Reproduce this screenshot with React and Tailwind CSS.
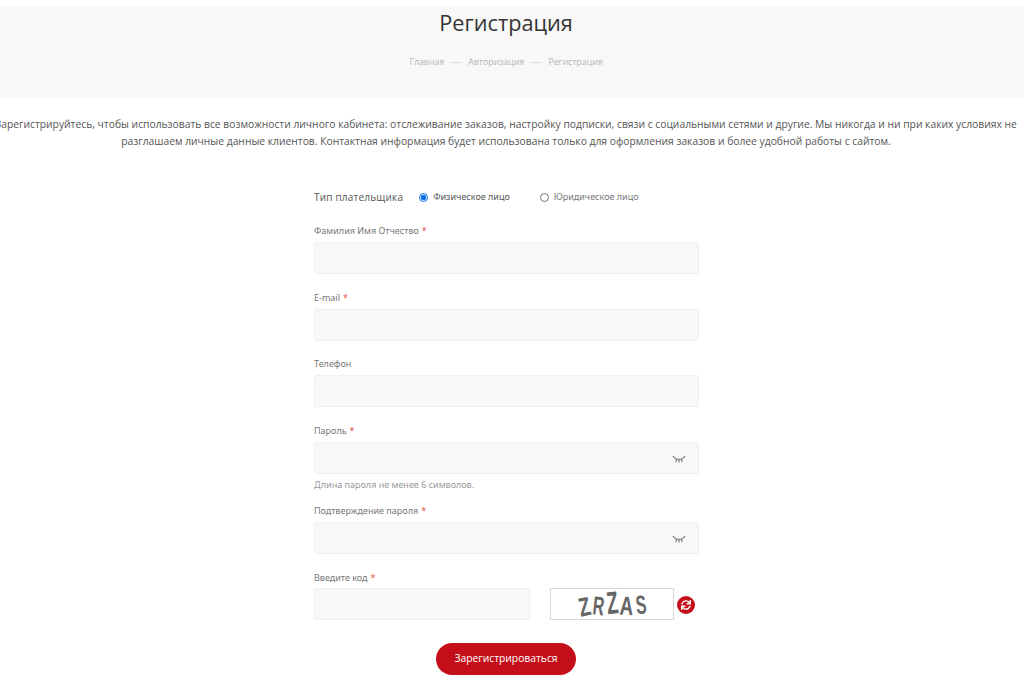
import { FaSync } from 'react-icons/fa'

const sans = "font-['Open_Sans',sans-serif]"

function EyeClosed() {
  return (
    <svg width="14" height="8" viewBox="0 0 14 8" fill="none" stroke="#7a7a7a" strokeWidth="1.2" className="absolute right-[13px] top-[13px]">
      <path d="M2 2.5C4 5 10 5 12 2.5" />
      <path d="M1 1L2.5 3M4.5 4L4 7M7 4.5V7.5M9.5 4L10 7M13 1L11.5 3" />
    </svg>
  )
}

function Label({ children, required }) {
  return (
    <label className="block text-[9px] leading-[12px] text-[#777] font-['Noto_Sans',sans-serif]">
      {children}
      {required && <span className="ml-[3px] text-[#e8504a]">*</span>}
    </label>
  )
}

function Field({ label, required, eye, hint, className = '' }) {
  return (
    <div className={className}>
      <Label required={required}>{label}</Label>
      <div className="relative mt-[5px]">
        <input className="block h-[32px] w-full rounded-[3px] border border-[#f0f0f0] bg-[#f8f8f8] outline-none" />
        {eye && <EyeClosed />}
      </div>
      {hint && <p className="mt-[5px] text-[9px] leading-[12px] text-[#999] font-['Noto_Sans',sans-serif]">{hint}</p>}
    </div>
  )
}

function Captcha() {
  return (
    <div className="ml-[20px] flex h-[32px] w-[124px] items-center overflow-hidden border-[1.5px] border-[#d8d8d8] bg-white pl-[27px]">
      <span className="flex whitespace-nowrap text-[21px] font-bold leading-none text-[#666] font-['Liberation_Sans',sans-serif]">
        <span className="inline-block translate-y-[2px] -rotate-12 scale-x-90 scale-y-125">Z</span>
        <span className="inline-block translate-y-[1px] rotate-6 scale-x-75 scale-y-125">R</span>
        <span className="inline-block -translate-y-[2px] -rotate-6 scale-x-90 scale-y-150">Z</span>
        <span className="inline-block translate-y-[1px] rotate-3 scale-x-90 scale-y-125">A</span>
        <span className="inline-block -rotate-6 scale-x-75 scale-y-125">S</span>
      </span>
    </div>
  )
}

export default function App() {
  return (
    <div className={`h-[680px] w-[1024px] overflow-hidden bg-white pt-[6px] ${sans}`}>
      <div className="h-[91px] bg-[#f8f8f8] pr-[12px] text-center">
        <h1 className="pt-[1px] text-[21.7px] leading-[32px] text-[#333]">Регистрация</h1>
        <div className="mt-[16px] flex items-center justify-center gap-[7px] text-[8.8px] leading-[14px] text-[#b5b5b5]">
          <span>Главная</span>
          <span className="h-px w-[10px] bg-[#d8d8d8]" />
          <span>Авторизация</span>
          <span className="h-px w-[10px] bg-[#d8d8d8]" />
          <span>Регистрация</span>
        </div>
      </div>

      <p className="-ml-[10px] mt-[19px] w-[1032px] whitespace-nowrap text-center text-[10.3px] leading-[17px] text-[#555]">
        Зарегистрируйтесь, чтобы использовать все возможности личного кабинета: отслеживание заказов, настройку подписки, связи с социальными сетями и другие. Мы никогда и ни при каких условиях не
        <br />
        разглашаем личные данные клиентов. Контактная информация будет использована только для оформления заказов и более удобной работы с сайтом.
      </p>

      <form className="ml-[314px] mt-[40px] w-[385px]">
        <div className="flex h-[14px] items-center">
          <span className="text-[10px] tracking-[0.2px] text-[#555]">Тип плательщика</span>
          <input type="radio" name="payer" defaultChecked className="ml-[16px] h-[9px] w-[9px] accent-[#0b6fe8]" />
          <span className="ml-[5px] text-[9px] text-[#555] font-['Noto_Sans',sans-serif]">Физическое лицо</span>
          <input type="radio" name="payer" className="ml-[30px] h-[9px] w-[9px]" />
          <span className="ml-[5px] text-[9px] text-[#777] font-['Noto_Sans',sans-serif]">Юридическое лицо</span>
        </div>

        <Field className="mt-[21px]" label="Фамилия Имя Отчество" required />
        <Field className="mt-[18px]" label="E-mail" required />
        <Field className="mt-[17px]" label="Телефон" />
        <Field className="mt-[18px]" label="Пароль" required eye hint="Длина пароля не менее 6 символов." />
        <Field className="mt-[14px]" label="Подтверждение пароля" required eye />

        <div className="mt-[18px]">
          <Label required>Введите код</Label>
          <div className="mt-[4px] flex items-center">
            <input className="block h-[32px] w-[216px] rounded-[3px] border border-[#f0f0f0] bg-[#f8f8f8] outline-none" />
            <Captcha />
            <span className="ml-[3px] mt-[2px] flex h-[18px] w-[18px] items-center justify-center rounded-full bg-[#c40f1a] text-white">
              <FaSync size={10} />
            </span>
          </div>
        </div>

        <div className="mt-[23px] flex justify-center pr-[1px]">
          <button type="button" className="h-[32px] w-[140px] rounded-full bg-[#c40f1a] text-[10.3px] text-white">
            Зарегистрироваться
          </button>
        </div>
      </form>
    </div>
  )
}
